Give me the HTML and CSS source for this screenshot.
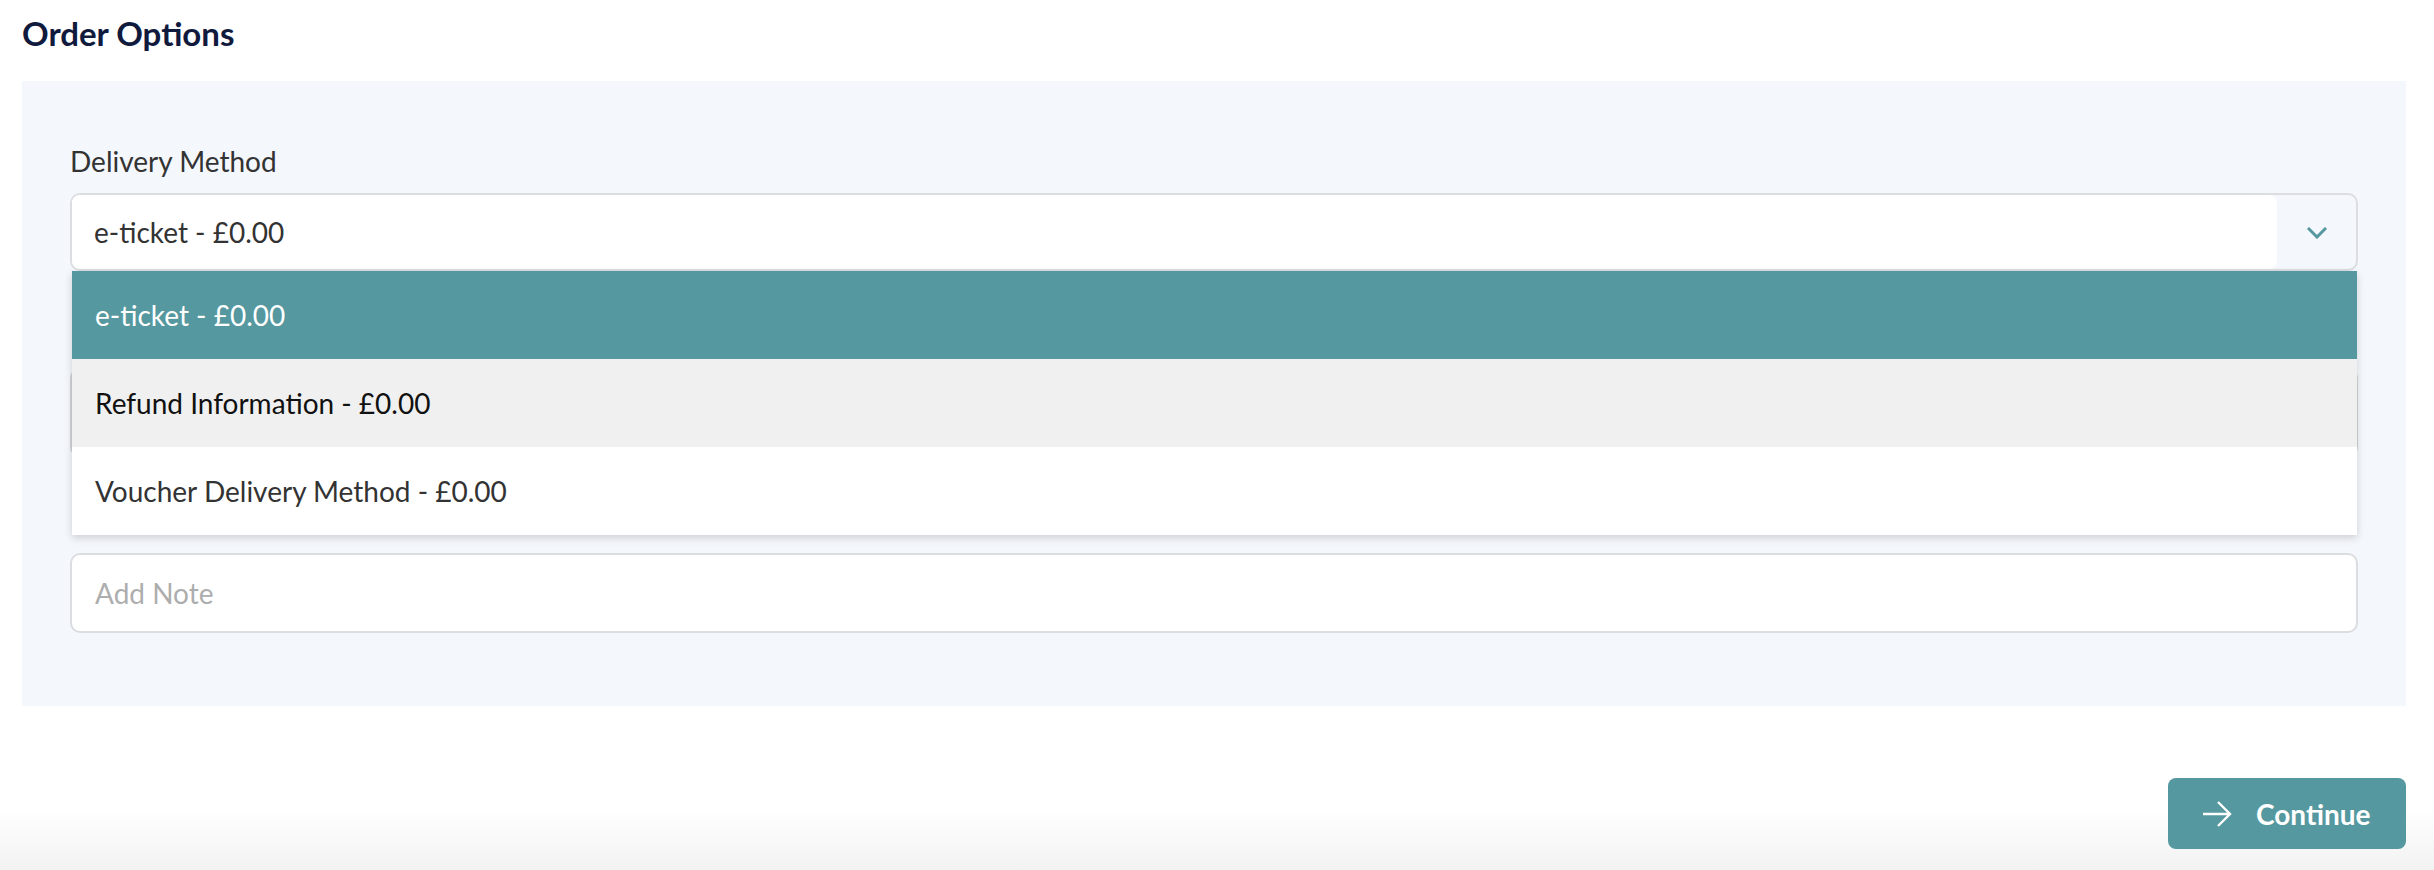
FILE: index.html
```html
<!DOCTYPE html>
<html lang="en">
<head>
<meta charset="utf-8">
<title>Order Options</title>
<link rel="stylesheet" href="styles.css">
</head>
<body>
<main class="page">
  <h1 class="title">Order Options</h1>
  <section class="panel">
    <div class="field">
      <label class="label">Delivery Method</label>
      <div class="select">
        <div class="select-value">e-ticket - £0.00</div>
        <div class="select-arrow">
          <svg width="20" height="12" viewBox="0 0 20 12" aria-hidden="true"><path d="M2 2 L10 10 L18 2" fill="none" stroke="#55989f" stroke-width="3" stroke-linecap="square"/></svg>
        </div>
        <ul class="menu">
          <li class="option option-selected">e-ticket - £0.00</li>
          <li class="option option-hover">Refund Information - £0.00</li>
          <li class="option">Voucher Delivery Method - £0.00</li>
        </ul>
      </div>
    </div>
    <div class="hidden-field"></div>
    <input class="note" type="text" placeholder="Add Note">
  </section>
  <div class="actions">
    <button class="continue" type="button">
      <svg width="30" height="26" viewBox="0 0 30 26" aria-hidden="true"><path d="M1 13 H28 M16 1 L28 13 L16 25" fill="none" stroke="#fff" stroke-width="2.4" stroke-linejoin="miter"/></svg>
      <span>Continue</span>
    </button>
  </div>
</main>
</body>
</html>
```

FILE: styles.css
```css
html {
  height: 100%;
}
body {
  margin: 0;
  font-family: Lato, "Noto Sans", sans-serif;
  background: linear-gradient(to bottom, #ffffff 0, #ffffff 810px, #f2f2f2 870px);
  background-repeat: no-repeat;
  height: 870px;
  overflow: hidden;
}
.page {
  padding: 14px 28px 0 22px;
}
.title {
  margin: 0;
  font-size: 33px;
  line-height: 38px;
  font-weight: 700;
  color: #0f1a3d;
}
.panel {
  margin-top: 29px;
  background: #f4f7fc;
  padding: 63px 48px 73px;
  display: flex;
  flex-direction: column;
}
.field {
  display: flex;
  flex-direction: column;
}
.label {
  font-size: 28px;
  line-height: 34px;
  color: #333333;
}
.select {
  position: relative;
  margin-top: 15px;
  height: 78px;
  box-sizing: border-box;
  border: 2px solid #dcdde1;
  border-radius: 10px;
  display: flex;
  z-index: 2;
}
.select-value {
  flex: 1;
  background: #ffffff;
  border-radius: 8px;
  padding: 0 22px;
  display: flex;
  align-items: center;
  font-size: 28px;
  color: #333333;
}
.select-arrow {
  width: 79px;
  display: flex;
  align-items: center;
  justify-content: center;
  padding-top: 2px;
  box-sizing: border-box;
}
.menu {
  position: absolute;
  top: calc(100% + 2px);
  left: 0;
  right: -1px;
  margin: 0;
  padding: 0;
  list-style: none;
  background: #ffffff;
  box-shadow: 0 3px 8px rgba(0, 0, 0, 0.16);
}
.option {
  height: 88px;
  display: flex;
  align-items: center;
  padding: 0 23px;
  font-size: 28px;
  color: #333333;
}
.option-selected {
  background: #55989f;
  color: #ffffff;
}
.option-hover {
  background: #f0f0f0;
  color: #111111;
}
.hidden-field {
  margin-top: 97px;
  height: 89px;
  box-sizing: border-box;
  border: 2px solid #d2d3d7;
  border-radius: 10px;
  background: #ffffff;
}
.note {
  margin-top: 96px;
  height: 80px;
  box-sizing: border-box;
  border: 2px solid #dcdde1;
  border-radius: 10px;
  background: #ffffff;
  padding: 0 23px;
  font-family: Lato, "Noto Sans", sans-serif;
  font-size: 28px;
  color: #333333;
  outline: none;
}
.note::placeholder {
  color: #adadad;
}
.actions {
  display: flex;
  justify-content: flex-end;
  margin-top: 72px;
}
.continue {
  width: 238px;
  height: 71px;
  border: none;
  border-radius: 8px;
  background: #55989f;
  color: #ffffff;
  display: flex;
  align-items: center;
  padding: 0 0 0 34px;
  gap: 24px;
  font-family: Lato, "Noto Sans", sans-serif;
  font-size: 28px;
  font-weight: 700;
  cursor: pointer;
}
```
